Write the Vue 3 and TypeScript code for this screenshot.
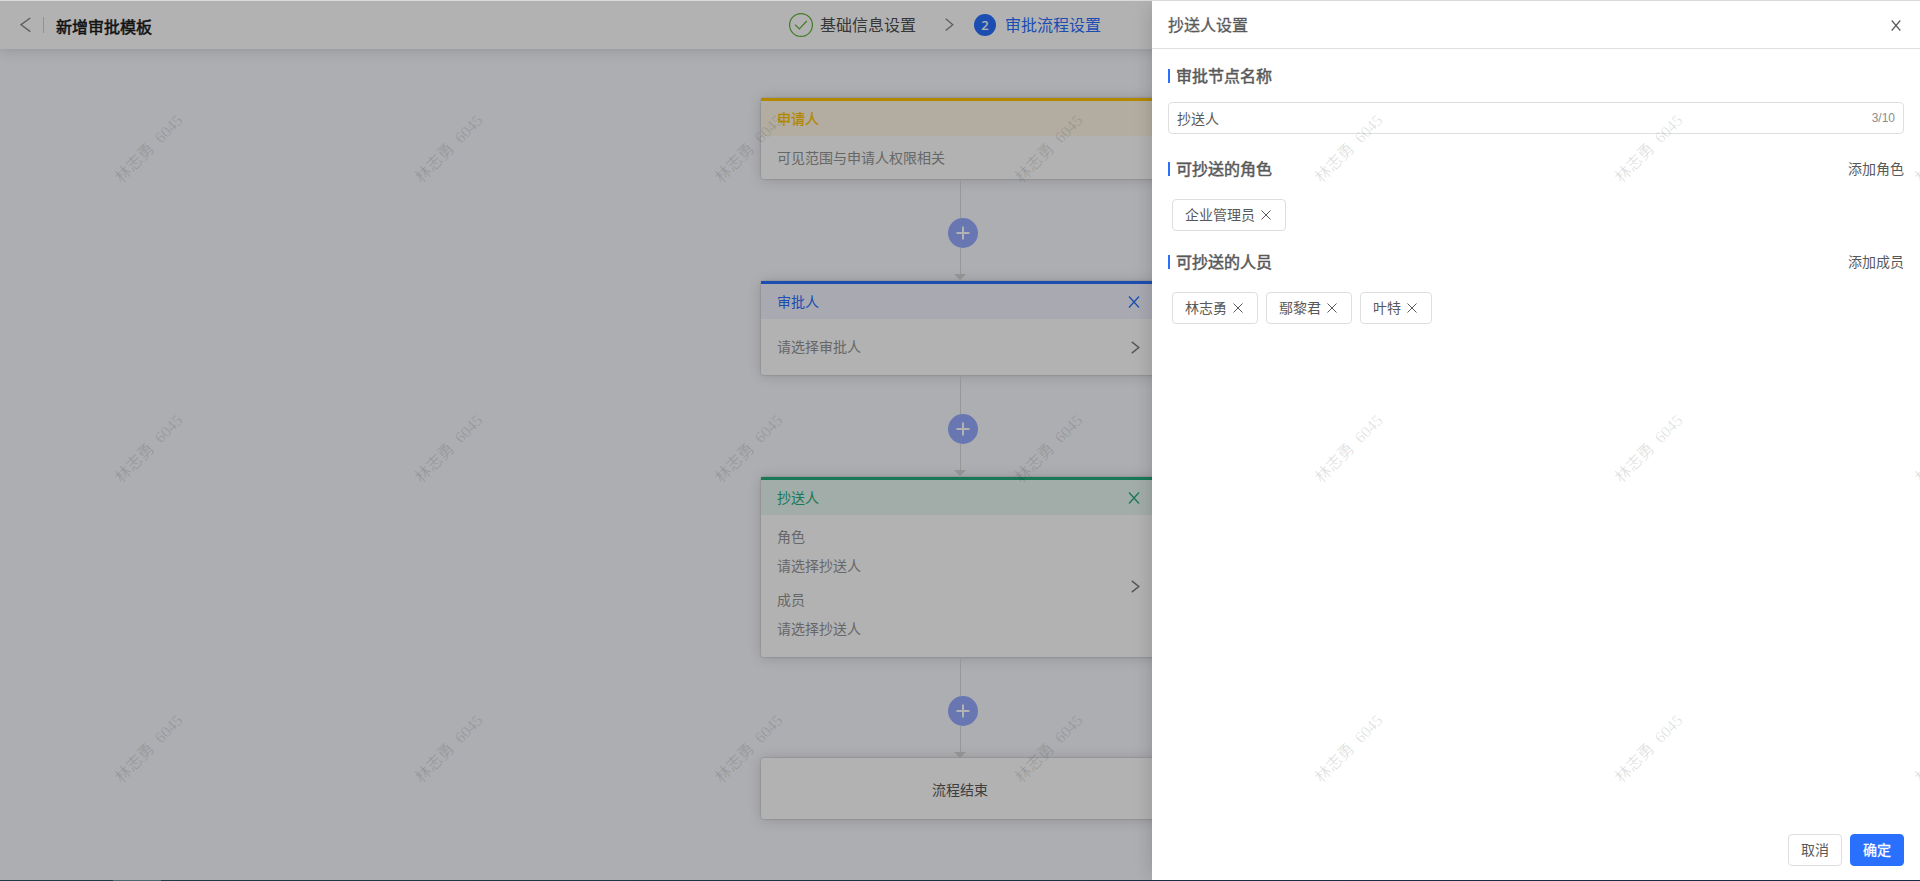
<script setup lang="ts">
interface FlowNode {
  kind: 'applicant' | 'approver' | 'copier'
  title: string
  lines: string[]
  editable: boolean
}

const nodes: FlowNode[] = [
  { kind: 'applicant', title: '申请人', lines: ['可见范围与申请人权限相关'], editable: false },
  { kind: 'approver', title: '审批人', lines: ['请选择审批人'], editable: true },
  { kind: 'copier', title: '抄送人', lines: ['角色', '请选择抄送人', '成员', '请选择抄送人'], editable: true },
]

const nodeName = '抄送人'
const roles: string[] = ['企业管理员']
const members: string[] = ['林志勇', '鄢黎君', '叶特']
const watermarks = Array.from({ length: 21 }, (_, i) => i)
</script>

<template>
  <div class="page">
    <header class="topbar">
      <svg class="back" width="12" height="16" viewBox="0 0 12 16"><path d="M10.3 1 1 7.7 10.3 14.6" /></svg>
      <i class="divider"></i>
      <h1>新增审批模板</h1>
      <div class="steps">
        <svg class="done" width="24" height="24" viewBox="0 0 24 24">
          <circle cx="12" cy="12" r="11.4" />
          <path d="M6 11.6 10.3 16 17.8 8" />
        </svg>
        <span class="step">基础信息设置</span>
        <svg class="next" width="9" height="14" viewBox="0 0 9 14"><path d="M.7 .8 7.8 6.7 .7 12.6" /></svg>
        <b class="number">2</b>
        <span class="step active">审批流程设置</span>
      </div>
    </header>

    <main class="flow">
      <template v-for="node in nodes" :key="node.kind">
        <section class="card" :class="node.kind">
          <div class="card-head">
            <span>{{ node.title }}</span>
            <svg v-if="node.editable" width="12" height="12" viewBox="0 0 12 12"><path d="M1 .5 11 11.5M11 .5 1 11.5" /></svg>
          </div>
          <div class="card-body">
            <div class="lines">
              <p v-for="(line, i) in node.lines" :key="i">{{ line }}</p>
            </div>
            <svg v-if="node.editable" width="9" height="13" viewBox="0 0 9 13"><path d="M.8 .8 7.8 6.5 .8 12.2" /></svg>
          </div>
        </section>
        <div class="connector">
          <i class="line upper"></i>
          <button class="add">
            <svg width="14" height="14" viewBox="0 0 14 14"><path d="M7 .5v13M.5 7h13" /></svg>
          </button>
          <i class="line lower"></i>
          <i class="arrow"></i>
        </div>
      </template>
      <section class="card end">流程结束</section>
    </main>

    <div class="mask"></div>

    <aside class="drawer">
      <div class="drawer-head">
        <span>抄送人设置</span>
        <svg width="10" height="11" viewBox="0 0 10 11"><path d="M.7 .5 9.3 10.5M9.3 .5 .7 10.5" /></svg>
      </div>
      <div class="drawer-body">
        <div class="title-row"><h2>审批节点名称</h2></div>
        <div class="input">
          <span>{{ nodeName }}</span>
          <em>{{ nodeName.length }}/10</em>
        </div>
        <div class="title-row second">
          <h2>可抄送的角色</h2>
          <a>添加角色</a>
        </div>
        <div class="tags">
          <span v-for="role in roles" :key="role" class="tag">
            <span class="tag-name">{{ role }}</span>
            <svg width="14" height="14" viewBox="0 0 14 14"><path d="M2.5 2.5 11.5 11.5M11.5 2.5 2.5 11.5" /></svg>
          </span>
        </div>
        <div class="title-row third">
          <h2>可抄送的人员</h2>
          <a>添加成员</a>
        </div>
        <div class="tags">
          <span v-for="member in members" :key="member" class="tag">
            <span class="tag-name">{{ member }}</span>
            <svg width="14" height="14" viewBox="0 0 14 14"><path d="M2.5 2.5 11.5 11.5M11.5 2.5 2.5 11.5" /></svg>
          </span>
        </div>
      </div>
      <footer class="drawer-foot">
        <button class="btn">取消</button>
        <button class="btn primary">确定</button>
      </footer>
    </aside>

    <div class="watermark">
      <div v-for="n in watermarks" :key="n" class="mark"><span>林志勇&nbsp; 6045</span></div>
    </div>
    <i class="edge top"></i>
    <i class="edge bottom"></i>
  </div>
</template>

<style>
body {
  margin: 0;
  overflow: hidden;
}
</style>

<style scoped>
.page {
  position: relative;
  box-sizing: border-box;
  width: 1920px;
  height: 881px;
  padding-top: 1px;
  overflow: hidden;
  background: #f8f9fe;
  font-family: "Noto Sans CJK SC", sans-serif;
  font-size: 14px;
  color: #595959;
}
.page * {
  box-sizing: border-box;
}
svg {
  display: block;
  flex: none;
  fill: none;
  stroke: currentColor;
}
h1, h2, p {
  margin: 0;
}
button {
  font: inherit;
}

.topbar {
  display: flex;
  align-items: center;
  height: 48px;
  padding-left: 20px;
  background: #fff;
  box-shadow: 0 2px 12px rgba(0, 0, 0, 0.14);
}
.back {
  margin-right: 11px;
  color: #888;
  stroke-width: 1.4;
}
.divider {
  width: 1px;
  height: 16px;
  margin-right: 12px;
  background: #d0d0d0;
}
h1 {
  width: 96px;
  margin-top: 1px;
  font-size: 16px;
  line-height: 24px;
  font-weight: 400;
  color: #1c1c1c;
  -webkit-text-stroke: 0.55px currentColor;
}
.steps {
  display: flex;
  align-items: center;
  margin-left: 637px;
  font-size: 16px;
  line-height: 24px;
}
.done {
  margin-right: 7px;
  color: #5fb336;
  stroke-width: 1.2;
}
.step {
  padding-bottom: 2px;
  color: #4f4f4f;
}
.step.active {
  color: #2970ff;
}
.next {
  margin: 0 20px 0 29px;
  color: #888;
  stroke-width: 1.3;
}
.number {
  width: 22px;
  height: 22px;
  margin-right: 9px;
  border-radius: 50%;
  background: #2970ff;
  color: #fff;
  font: 600 13px/22px "Open Sans", "Noto Sans", sans-serif;
  text-align: center;
}

.flow {
  display: flex;
  flex-direction: column;
  width: 400px;
  margin: 49px 0 0 761px;
}
.card {
  border-radius: 3px;
  background: #fff;
  box-shadow: 0 0 1px 1px rgba(0, 0, 0, 0.08), 0 1px 14px rgba(0, 0, 0, 0.16);
}
.card-head {
  display: flex;
  align-items: center;
  justify-content: space-between;
  height: 38px;
  padding: 0 21px 0 16px;
  border-top: 3px solid currentColor;
  line-height: 22px;
}
.card-head span {
  padding-bottom: 2px;
}
.card-head svg {
  stroke-width: 1.3;
}
.applicant .card-head {
  background: #fff8e5;
  color: #ffc300;
  -webkit-text-stroke: 0.3px currentColor;
}
.approver .card-head {
  background: #f1f3fe;
  color: #2970ff;
}
.copier .card-head {
  background: #e9f7f1;
  color: #25ae7b;
}
.card-body {
  display: flex;
  align-items: center;
  justify-content: space-between;
  height: 43px;
  padding: 0 21px 0 16px;
  color: #949494;
  line-height: 22px;
}
.card-body svg {
  color: #7d7d7d;
  stroke-width: 1.5;
}
.lines {
  padding-bottom: 2px;
}
.approver .card-body {
  height: 56px;
}
.copier .card-body {
  height: 142px;
}
.copier .card-body .lines {
  height: 122px;
}
.copier p:nth-child(even) {
  margin-top: 7px;
}
.copier p:nth-child(3) {
  margin-top: 12px;
}
.end {
  height: 61px;
  padding-right: 2px;
  line-height: 62px;
  text-align: center;
}
.connector {
  display: flex;
  flex-direction: column;
  align-items: center;
  height: 102px;
  padding-right: 1px;
}
.copier + .connector {
  height: 101px;
}
.line {
  width: 1px;
  flex: none;
  background: #d9d9d9;
}
.upper {
  height: 39px;
}
.lower {
  height: 26px;
}
.add {
  display: flex;
  flex: none;
  align-items: center;
  justify-content: center;
  width: 30px;
  height: 30px;
  margin-left: 5px;
  padding: 0;
  border: 0;
  border-radius: 50%;
  background: #95abff;
  color: #fff;
}
.add svg {
  stroke-width: 2;
}
.arrow {
  margin-right: 1px;
  border: 6px solid transparent;
  border-top-color: #d9d9d9;
  border-bottom: 0;
}

.mask {
  position: absolute;
  inset: 0;
  background: rgba(0, 0, 0, 0.3);
}

.drawer {
  position: absolute;
  top: 1px;
  right: 0;
  bottom: 1px;
  display: flex;
  flex-direction: column;
  width: 768px;
  background: #fff;
  box-shadow: -6px 0 16px -8px rgba(0, 0, 0, 0.12), -4px 0 18px rgba(0, 0, 0, 0.06);
}
.drawer-head {
  display: flex;
  align-items: center;
  justify-content: space-between;
  height: 48px;
  padding: 0 19px 0 16px;
  border-bottom: 1px solid #e0e0e0;
  font-size: 16px;
  -webkit-text-stroke: 0.3px currentColor;
}
.drawer-head span {
  padding-bottom: 2px;
}
.drawer-head svg {
  margin-top: 1px;
  stroke-width: 1.2;
  -webkit-text-stroke: 0;
}
.drawer-body {
  flex: 1;
  padding: 14px 16px 0;
}
.title-row {
  display: flex;
  align-items: center;
  justify-content: space-between;
  height: 24px;
}
.title-row.second {
  margin-top: 22px;
}
.title-row.third {
  margin-top: 18px;
}
h2 {
  display: flex;
  align-items: center;
  font-size: 16px;
  line-height: 24px;
  font-weight: 400;
  -webkit-text-stroke: 0.5px currentColor;
}
h2::before {
  content: "";
  width: 2px;
  height: 14px;
  margin: 2px 6px 0 0;
  background: #2970ff;
}
.input {
  display: flex;
  align-items: center;
  justify-content: space-between;
  height: 32px;
  margin-top: 15px;
  padding: 0 8px;
  border: 1px solid #dedede;
  border-radius: 4px;
}
.input em {
  font: normal 12px/20px "Liberation Sans", Arial, sans-serif;
  color: #8c8c8c;
}
.tags {
  display: flex;
  gap: 8px;
  margin-top: 19px;
  padding-left: 4px;
}
.tag {
  display: flex;
  align-items: center;
  gap: 4px;
  height: 32px;
  padding: 0 12px;
  border: 1px solid #dedede;
  border-radius: 4px;
}
.tag-name {
  padding-bottom: 2px;
}
.drawer-foot {
  display: flex;
  justify-content: flex-end;
  gap: 8px;
  padding: 0 16px 14px;
}
.btn {
  width: 54px;
  height: 32px;
  padding: 0 0 2px;
  border: 1px solid #dedede;
  border-radius: 4px;
  background: #fff;
  color: #595959;
}
.btn.primary {
  border-color: #2970ff;
  background: #2970ff;
  color: #fff;
  -webkit-text-stroke: 0.3px currentColor;
}

.watermark {
  position: absolute;
  top: -1px;
  left: -1px;
  display: grid;
  grid-template-columns: repeat(7, 300px);
  grid-auto-rows: 300px;
  pointer-events: none;
}
.mark {
  display: flex;
  align-items: center;
  justify-content: center;
  color: rgba(0, 0, 0, 0.12);
  font: 16px/20px "Liberation Serif", "Noto Sans CJK SC", serif;
  white-space: nowrap;
}
.mark span {
  transform: rotate(-45deg);
}
.edge {
  position: absolute;
  left: 0;
  right: 0;
  height: 1px;
}
.edge.top {
  top: 0;
  background: #d8d9d9;
}
.edge.bottom {
  bottom: 0;
  background: linear-gradient(90deg, #1f3b47 113px, #50666f 113px 161px, #1f3b47 161px, #1b2a45 1500px);
}
</style>
